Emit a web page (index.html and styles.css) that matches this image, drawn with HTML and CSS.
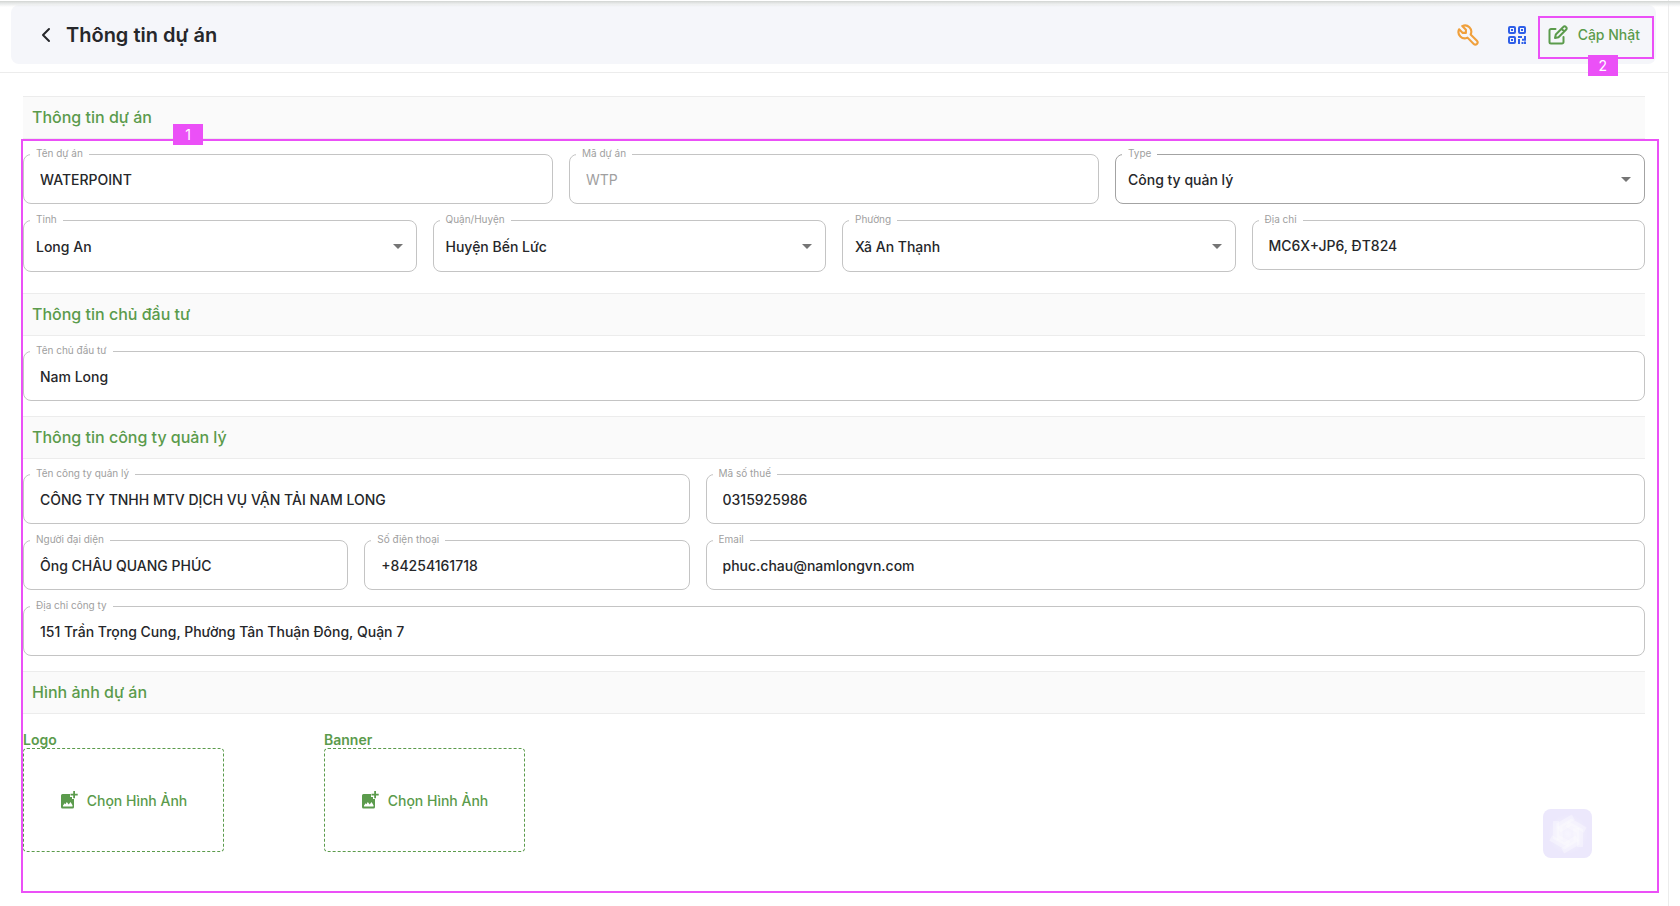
FILE: index.html
```html
<!DOCTYPE html>
<html lang="vi">
<head>
<meta charset="utf-8">
<meta name="viewport" content="width=device-width, initial-scale=1">
<title>Thông tin dự án</title>
<link rel="stylesheet" href="styles.css">
</head>
<body>
<div class="page">
  <header class="topbar">
    <div class="toolbar">
      <button class="icon-btn back" type="button" aria-label="Quay lại">
        <svg width="10" height="16" viewBox="0 0 10 16" fill="none" stroke="currentColor" stroke-width="2" stroke-linecap="round" stroke-linejoin="round"><path d="M8 2 2 8l6 6"/></svg>
      </button>
      <h1 class="title">Thông tin dự án</h1>
      <div class="actions">
        <button class="icon-btn tool" type="button" aria-label="Công cụ">
          <svg width="22" height="22" viewBox="1.500 1.500 21 21" fill="none" stroke="currentColor" stroke-width="2" stroke-linecap="round" stroke-linejoin="round"><path d="M7 10h3V7L6.500 3.500a6 6 0 0 1 8 8l6 6a2 2 0 0 1-3 3l-6-6a6 6 0 0 1-8-8z"/></svg>
        </button>
        <button class="icon-btn qr" type="button" aria-label="Mã QR">
          <svg width="18" height="18" viewBox="0 0 18 18" fill="none" stroke="currentColor" stroke-width="2"><rect x="1" y="1" width="6" height="6" rx="1"/><rect x="11" y="1" width="6" height="6" rx="1"/><rect x="1" y="11" width="6" height="6" rx="1"/><path d="M3 4h2M13 4h2M3 14h2M10 11h4M17 10v3.500M14 13.800h4M11 13v5M13.500 17h2M17 15.500V18"/></svg>
        </button>
        <button class="update" type="button">
          <svg width="20" height="20" viewBox="0 0 20 20" fill="none" stroke="currentColor" stroke-width="2" stroke-linecap="round" stroke-linejoin="round"><path d="M7.500 4H3a1.500 1.500 0 0 0-1.500 1.500V17A1.500 1.500 0 0 0 3 18.500h11a1.500 1.500 0 0 0 1.500-1.500v-5"/><path d="M7 13l.8-3.500 7.700-7.700a1.500 1.500 0 0 1 2.200 0l.5.500a1.500 1.500 0 0 1 0 2.200L10.500 12.200zM13.500 3.800l2.700 2.700"/></svg>
          <span>Cập Nhật</span>
          <span class="mark mark-update" aria-hidden="true"><span class="tag">2</span></span>
        </button>
      </div>
    </div>
  </header>

  <main class="details">
    <form class="form">
      <section>
        <h2 class="heading">Thông tin dự án</h2>
        <div class="grid project">
          <div class="field third"><label for="name">Tên dự án</label><input id="name" type="text" value="WATERPOINT"></div>
          <div class="field third"><label for="code">Mã dự án</label><input id="code" type="text" value="WTP" disabled></div>
          <div class="field third select active"><label for="type">Type</label><select id="type"><option>Công ty quản lý</option></select></div>
          <div class="field quarter select tall"><label for="province">Tỉnh</label><select id="province"><option>Long An</option></select></div>
          <div class="field quarter select tall"><label for="district">Quận/Huyện</label><select id="district"><option>Huyện Bến Lức</option></select></div>
          <div class="field quarter select tall"><label for="ward">Phường</label><select id="ward"><option>Xã An Thạnh</option></select></div>
          <div class="field quarter"><label for="address">Địa chỉ</label><input id="address" type="text" value="MC6X+JP6, ĐT824"></div>
        </div>
      </section>
      <section>
        <h2 class="heading">Thông tin chủ đầu tư</h2>
        <div class="grid">
          <div class="field full"><label for="owner">Tên chủ đầu tư</label><input id="owner" type="text" value="Nam Long"></div>
        </div>
      </section>
      <section>
        <h2 class="heading">Thông tin công ty quản lý</h2>
        <div class="grid">
          <div class="field narrow"><label for="company">Tên công ty quản lý</label><input id="company" type="text" value="CÔNG TY TNHH MTV DỊCH VỤ VẬN TẢI NAM LONG"></div>
          <div class="field wide"><label for="tax">Mã số thuế</label><input id="tax" type="text" value="0315925986"></div>
          <div class="field small"><label for="person">Người đại diện</label><input id="person" type="text" value="Ông CHÂU QUANG PHÚC"></div>
          <div class="field small"><label for="phone">Số điện thoại</label><input id="phone" type="tel" value="+84254161718"></div>
          <div class="field wide"><label for="email">Email</label><input id="email" type="email" value="phuc.chau@namlongvn.com"></div>
          <div class="field full"><label for="office">Địa chỉ công ty</label><input id="office" type="text" value="151 Trần Trọng Cung, Phường Tân Thuận Đông, Quận 7"></div>
        </div>
      </section>
      <section>
        <h2 class="heading">Hình ảnh dự án</h2>
        <div class="uploads">
          <div class="upload">
            <h3 class="upload-title" id="logo-title">Logo</h3>
            <button class="drop" type="button" aria-describedby="logo-title">
              <svg width="18" height="18" viewBox="0 0 18 18" fill="currentColor"><path fill-rule="evenodd" d="M2.500 3H10v3h2v2h2v8a1.500 1.500 0 0 1-1.500 1.500h-10A1.500 1.500 0 0 1 1 16V4.500A1.500 1.500 0 0 1 2.500 3zM3 15.500h9.500v-1.300L10.500 11l-1.800 2.500L6.800 11l-1.300 2.200-.8-1L3 14.500z"/><path d="M13.200 0h1.800v2.700h2.700v1.800H15v2.700h-1.800V4.500h-2.700V2.700h2.700z"/></svg>
              <span>Chọn Hình Ảnh</span>
            </button>
          </div>
          <div class="upload">
            <h3 class="upload-title" id="banner-title">Banner</h3>
            <button class="drop" type="button" aria-describedby="banner-title">
              <svg width="18" height="18" viewBox="0 0 18 18" fill="currentColor"><path fill-rule="evenodd" d="M2.500 3H10v3h2v2h2v8a1.500 1.500 0 0 1-1.500 1.500h-10A1.500 1.500 0 0 1 1 16V4.500A1.500 1.500 0 0 1 2.500 3zM3 15.500h9.500v-1.300L10.500 11l-1.800 2.500L6.800 11l-1.300 2.200-.8-1L3 14.500z"/><path d="M13.200 0h1.800v2.700h2.700v1.800H15v2.700h-1.800V4.500h-2.700V2.700h2.700z"/></svg>
              <span>Chọn Hình Ảnh</span>
            </button>
          </div>
        </div>
      </section>
      <div class="mark mark-form" aria-hidden="true"><span class="tag">1</span></div>
    </form>
  </main>
</div>
<button class="assistant" type="button" aria-label="Trợ lý">
  <svg width="42" height="42" viewBox="-21 -21 42 42">
    <defs>
      <radialGradient id="glow"><stop offset="0" stop-color="#fff"/><stop offset="1" stop-color="#fff" stop-opacity="0"/></radialGradient>
      <path id="blade" d="M-12 -13V3L1 10"/>
    </defs>
    <circle r="20" fill="url(#glow)" opacity=".6"/>
    <g fill="none" stroke="#fff" stroke-width="6" stroke-opacity=".32"><use href="#blade"/><use href="#blade" transform="rotate(60)"/><use href="#blade" transform="rotate(120)"/><use href="#blade" transform="rotate(180)"/><use href="#blade" transform="rotate(240)"/><use href="#blade" transform="rotate(300)"/></g>
  </svg>
</button>
</body>
</html>
```
FILE: styles.css
```css
* { box-sizing: border-box; }

:root {
  --green: #5b9b4c;
  --mark: #eb50f7;
  --ink: #26272a;
  --line: #c4c4c4;
}

body {
  margin: 0;
  background: #fff;
  color: var(--ink);
  font-family: Inter, "Noto Sans", sans-serif;
  font-size: 14px;
}

button, input, select { font: inherit; color: inherit; }
button { background: none; border: 0; padding: 0; cursor: pointer; }
h1, h2, h3 { margin: 0; }
svg { display: block; flex: none; }

.page {
  min-height: 100vh;
  margin-right: 11px;
  border-right: 1px solid #ececec;
}

.topbar {
  padding: 5px 12px 8px 11px;
  border-bottom: 1px solid #ececec;
}

.topbar::before {
  content: "";
  position: absolute;
  top: 1px;
  left: 0;
  right: 0;
  height: 6px;
  background: linear-gradient(#d2d5d2, #e4e6e6 34%, #f0f1f300);
}

.toolbar {
  display: flex;
  align-items: center;
  min-height: 59px;
  padding: 0 16px 0 30px;
  border-radius: 8px;
  background: #f5f6fa;
}

.icon-btn { color: var(--ink); }

.title {
  margin-left: 15px;
  font-size: 20px;
  font-weight: 600;
  line-height: 28px;
}

.actions {
  display: flex;
  align-items: center;
  margin-left: auto;
}

.tool { color: #f0a03c; margin-right: 29px; }
.qr { color: #2f5fe8; margin-right: 22px; }

.update {
  position: relative;
  display: flex;
  align-items: center;
  gap: 10px;
  color: var(--green);
  font-size: 14px;
  font-weight: 500;
}

.details { padding: 23px 23px 13px; }

.form {
  position: relative;
  min-height: 797px;
}

.heading {
  padding: 0 9px;
  border: solid #ececec;
  border-width: 1px 0;
  background: #fafafa;
  color: var(--green);
  font-size: 16px;
  font-weight: 500;
  line-height: 41px;
}

.grid {
  display: grid;
  grid-template-columns: repeat(24, 1fr);
  align-items: start;
  gap: 16px;
  padding: 15px 0;
}

.project { padding-bottom: 21px; }

.field { position: relative; min-width: 0; }
.full { grid-column: span 24; }
.third { grid-column: span 8; }
.quarter { grid-column: span 6; }
.narrow { grid-column: span 10; }
.wide { grid-column: span 14; }
.small { grid-column: span 5; }

.field label {
  position: absolute;
  top: -8px;
  left: 7px;
  padding: 0 6px;
  background: #fff;
  color: #a0a0a0;
  font-size: 10px;
  line-height: 14px;
}

.field input,
.field select {
  display: block;
  width: 100%;
  height: 50px;
  padding: 0 16px;
  border: 1px solid var(--line);
  border-radius: 8px;
  background: transparent;
  font-weight: 500;
  appearance: none;
}

.field select { padding: 0 36px 0 12px; }
.field input:disabled { color: #a0a0a0; font-weight: 400; }
.active select { border-color: #a3a3a3; }
.tall select { height: 52px; }

.select::after {
  content: "";
  position: absolute;
  top: calc(50% - 2px);
  right: 14px;
  border: 5px solid transparent;
  border-top-color: #757575;
  border-bottom: 0;
  pointer-events: none;
}

.uploads {
  display: flex;
  gap: 100px;
  padding-top: 17px;
}

.upload-title {
  color: var(--green);
  font-size: 14px;
  font-weight: 600;
  line-height: 17px;
}

.drop {
  display: flex;
  align-items: center;
  justify-content: center;
  gap: 9px;
  width: 201px;
  height: 104px;
  border: 1px dashed var(--green);
  border-radius: 4px;
  color: var(--green);
  font-size: 14px;
  font-weight: 500;
}

.mark {
  position: absolute;
  border: 2px solid var(--mark);
  pointer-events: none;
}

.mark-form { top: 43px; right: -14px; bottom: 0; left: -2px; }
.mark-update { top: -9px; right: -14px; bottom: -14px; left: -10px; }

.tag {
  position: absolute;
  width: 30px;
  background: var(--mark);
  color: #fff;
  font-size: 14px;
  font-weight: 400;
  line-height: 21px;
  text-align: center;
}

.mark-form .tag { top: -17px; left: 150px; }
.mark-update .tag { bottom: -19px; left: 48px; }

.assistant {
  position: fixed;
  right: 88px;
  bottom: 48px;
  display: grid;
  place-items: center;
  width: 49px;
  height: 49px;
  border-radius: 8px;
  background: #ece8fc;
}
```
